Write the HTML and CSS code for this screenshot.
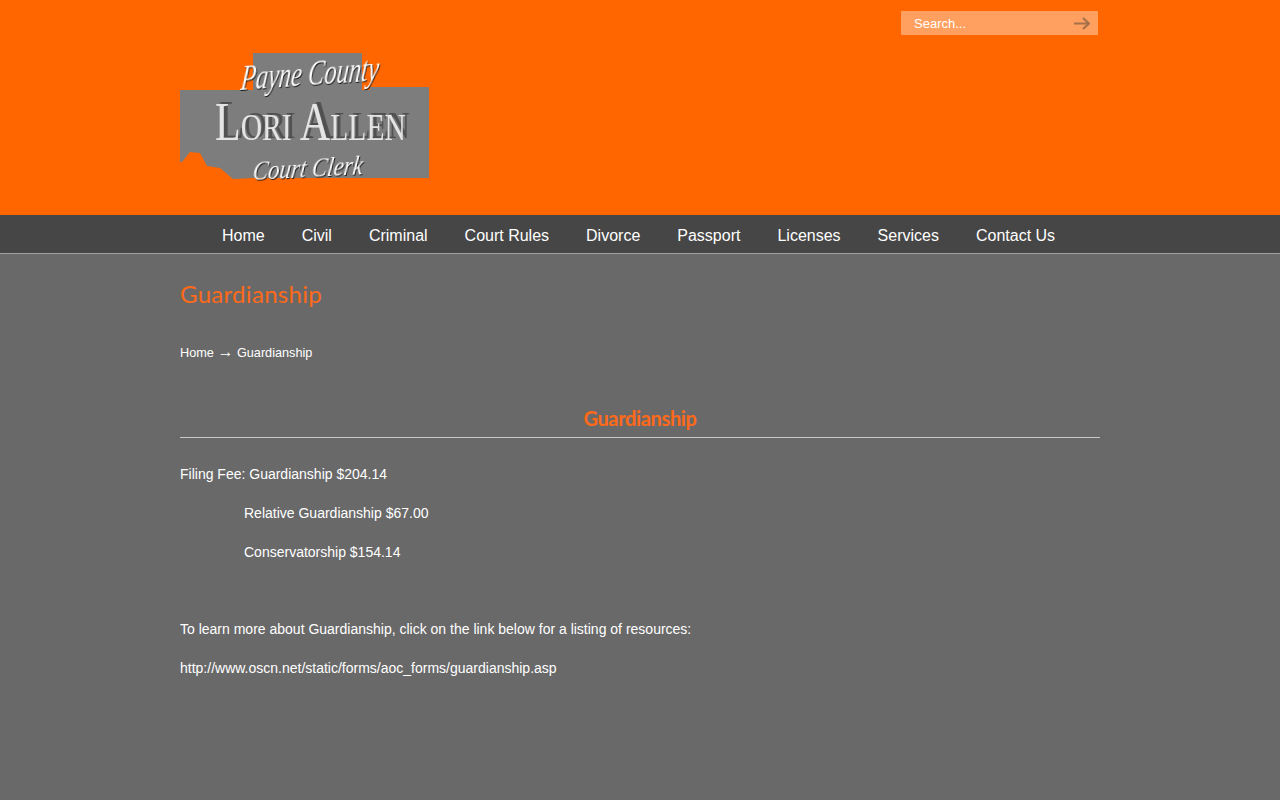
FILE: index.html
```html
<!DOCTYPE html>
<html lang="en">
<head>
  <meta charset="UTF-8">
  <title>Guardianship</title>
  <link rel="stylesheet" href="styles.css">
</head>
<body>

  <header class="top">
    <div class="wrap">
      <form class="search">
        <span class="search-text">Search...</span>
        <svg class="search-icon" width="16" height="13" viewBox="0 0 16 13"><path d="M0 6.500H15M9 1 15 6.500 9 12" fill="none" stroke="#a5704a" stroke-width="2.200"/></svg>
      </form>
      <svg class="logo" width="250" height="136" viewBox="0 0 250 136">
        <path d="M73 3H182V40H190V37H249V128H73L53 129 40 118 27 116 20 103 10 102 2 112 0 112V40H73Z" fill="#7d7d7d"/>
        <text class="logo-script" transform="translate(60 40) rotate(-4) skewX(-10) scale(.7 1)">Payne County</text>
        <text class="logo-name" transform="translate(35 90) scale(.78 1)">Lori Allen</text>
        <text class="logo-script logo-small" transform="translate(72 130) rotate(-3) skewX(-10) scale(.85 1)">Court Clerk</text>
      </svg>
    </div>
  </header>

  <nav class="menu">
    <div class="wrap menu-row">
      <a href="#">Home</a>
      <a href="#">Civil</a>
      <a href="#">Criminal</a>
      <a href="#">Court Rules</a>
      <a href="#">Divorce</a>
      <a href="#">Passport</a>
      <a href="#">Licenses</a>
      <a href="#">Services</a>
      <a href="#">Contact Us</a>
    </div>
  </nav>

  <main class="wrap content">
    <h1 class="page-title">Guardianship</h1>
    <div class="crumbs">Home <span class="crumb-arrow">→</span> Guardianship</div>

    <h2 class="section-title">Guardianship</h2>

    <p>Filing Fee: Guardianship $204.14</p>
    <p class="indent">Relative Guardianship $67.00</p>
    <p class="indent">Conservatorship $154.14</p>
    <p class="spaced">To learn more about Guardianship, click on the link below for a listing of resources:</p>
    <p>http://www.oscn.net/static/forms/aoc_forms/guardianship.asp</p>
  </main>

</body>
</html>
```

FILE: styles.css
```css
body {
  margin: 0;
  background: #696969;
  color: #fff;
  font-family: "Liberation Sans", Arial, sans-serif;
  font-size: 14px;
}

.wrap {
  width: 920px;
  margin: 0 auto;
}

.top {
  background: #ff6600;
  height: 215px;
}

.top .wrap {
  display: flow-root;
}

.search {
  box-sizing: border-box;
  width: 197px;
  height: 24px;
  margin: 11px 2px 0 auto;
  padding: 0 8px 0 13px;
  display: flex;
  align-items: center;
  justify-content: space-between;
  background: #ffa060;
  font-size: 13px;
}

.logo {
  display: block;
  margin-top: 15px;
}

/* no script font here, italic serif is the nearest */
.logo-script {
  font-family: "Liberation Serif", serif;
  font-style: italic;
  font-size: 35px;
  fill: #fff;
  filter: drop-shadow(1px 1px 0 #111);
}

.logo-small {
  font-size: 27px;
}

.logo-name {
  font-family: "Liberation Serif", serif;
  font-size: 54px;
  font-variant: small-caps;
  fill: #e4e4e4;
  filter: drop-shadow(5px -2px 0 #505050);
}

.menu {
  background: #464646;
  height: 38px;
  border-bottom: 1px solid #a0a0a0;
}

.menu-row {
  display: flex;
  gap: 37px;
  padding-left: 42px;
  box-sizing: border-box;
  line-height: 42px;
}

.menu a {
  color: #fff;
  font-size: 16px;
  text-decoration: none;
}

.page-title {
  margin: 25px 0 0;
  color: #ff6a1a;
  font-family: Lato, sans-serif;
  font-weight: 400;
  font-size: 24px;
  letter-spacing: .3px;
  line-height: 30px;
}

.crumbs {
  margin-top: 34px;
  font-size: 12.700px;
  line-height: 18px;
}

.crumb-arrow {
  font-size: 16px;
}

.section-title {
  margin: 44px 0 0;
  padding-bottom: 7px;
  border-bottom: 1px solid #c8c8c8;
  color: #ff6a1a;
  font-family: Lato, sans-serif;
  font-weight: 700;
  font-size: 20px;
  letter-spacing: -.35px;
  line-height: 24px;
  text-align: center;
}

p {
  margin: 0 0 20px;
  line-height: 19px;
}

.section-title + p {
  margin-top: 27px;
}

.indent {
  padding-left: 64px;
}

.spaced {
  margin-top: 58px;
}
```
